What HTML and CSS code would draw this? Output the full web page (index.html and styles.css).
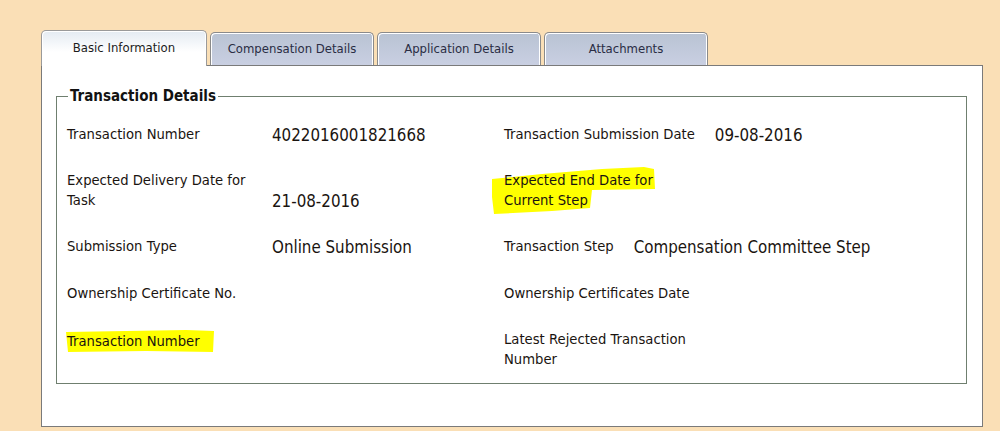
FILE: index.html
```html
<!DOCTYPE html>
<html lang="en">
<head>
    <meta charset="UTF-8">
    <meta name="viewport" content="width=device-width, initial-scale=1.0">
    <title>Transaction</title>
    <link rel="stylesheet" href="styles.css">
</head>
<body>
    <div class="page">
        <div class="tabs">
            <div class="tab active">Basic Information</div>
            <div class="tab">Compensation Details</div>
            <div class="tab">Application Details</div>
            <div class="tab">Attachments</div>
        </div>

        <div class="panel">
            <fieldset class="details">
                <legend>Transaction Details</legend>
                <div class="grid">
                    <div class="label">Transaction Number</div>
                    <div class="value">4022016001821668</div>
                    <div class="pair">
                        <span class="label">Transaction Submission Date</span>
                        <span class="value">09-08-2016</span>
                    </div>

                    <div class="label">Expected Delivery Date for<br>Task</div>
                    <div class="value bottom">21-08-2016</div>
                    <div class="pair">
                        <span class="label mark mark-wide">Expected End Date for<br>Current Step</span>
                    </div>

                    <div class="label">Submission Type</div>
                    <div class="value">Online Submission</div>
                    <div class="pair">
                        <span class="label">Transaction Step</span>
                        <span class="value">Compensation Committee Step</span>
                    </div>

                    <div class="label">Ownership Certificate No.</div>
                    <div class="value"></div>
                    <div class="pair">
                        <span class="label">Ownership Certificates Date</span>
                    </div>

                    <div class="label top"><span class="mark mark-line">Transaction Number</span></div>
                    <div class="value"></div>
                    <div class="pair">
                        <span class="label">Latest Rejected Transaction<br>Number</span>
                    </div>
                </div>
            </fieldset>
        </div>
    </div>
</body>
</html>
```

FILE: styles.css
```css
body {
    margin: 0;
    background-color: #fadfb6;
    font-family: "DejaVu Sans", sans-serif;
    color: #1a1410;
}
.page {
    padding: 30px 0 0 41px;
    width: 942px;
}
.tabs {
    display: flex;
    gap: 2px;
    height: 35px;
    position: relative;
    z-index: 1;
}
.tab {
    width: 164px;
    height: 33px;
    box-sizing: border-box;
    border: 1px solid #8a8a8a;
    border-bottom: none;
    border-radius: 5px 5px 0 0;
    box-shadow: inset 1px 1px 0 #ffffff, inset -1px 0 0 #ffffff;
    background: linear-gradient(#b9c3d3, #c9cfe2);
    margin-top: 2px;
    font-family: "DejaVu Sans Condensed", "DejaVu Sans", sans-serif;
    font-size: 13px;
    color: #2a2d44;
    text-align: center;
    line-height: 31px;
}
.tab + .tab {
    margin-left: 1px;
}
.tab.active {
    width: 166px;
    height: 36px;
    margin-top: 0;
    background: linear-gradient(#e4ebf2, #ffffff 60%);
    color: #1c1c1c;
    line-height: 34px;
    border-color: #9a9a9a;
}
.panel {
    box-sizing: border-box;
    background: #ffffff;
    border: 1px solid #7a7a7a;
    height: 362px;
    padding: 21px 15px 0 14px;
}
.details {
    margin: 0;
    border: 1px solid #6f7f6f;
    padding: 19px 10px 13px 10px;
}
.details legend {
    font-family: "DejaVu Sans Condensed", "DejaVu Sans", sans-serif;
    font-weight: bold;
    font-size: 15px;
    padding: 0 2px;
    margin-left: 1px;
    color: #121212;
}
.grid {
    display: grid;
    grid-template-columns: 205px 232px 1fr;
    grid-template-rows: auto auto auto 22px auto;
    row-gap: 25px;
    align-items: center;
}
.label {
    font-size: 13.2px;
    line-height: 20px;
}
.value {
    font-family: "DejaVu Sans Condensed", "DejaVu Sans", sans-serif;
    font-size: 16.8px;
    line-height: 22px;
}
.bottom {
    align-self: end;
    margin-bottom: -1px;
}
.top {
    align-self: start;
    margin-top: 2px;
}
.pair {
    display: flex;
    align-items: center;
}
.pair .value {
    margin-left: 20px;
}
.mark {
    position: relative;
    z-index: 0;
}
.mark::before {
    content: "";
    position: absolute;
    z-index: -1;
    background: #ffff00;
}
.mark-line {
    display: inline-block;
}
.mark-line::before {
    left: -1px;
    top: -2px;
    width: 148px;
    height: 22px;
    clip-path: polygon(0 2px, 60px 1px, 120px 0, 148px 1px, 147px 22px, 80px 21px, 2px 22px);
}
.mark-wide::before {
    left: -12px;
    top: -4px;
    width: 163px;
    height: 48px;
    clip-path: polygon(0 12px, 50px 7px, 110px 2px, 152px 0, 162px 2px, 163px 22px, 100px 23px, 98px 41px, 60px 44px, 2px 47px, 0 30px);
}
```
